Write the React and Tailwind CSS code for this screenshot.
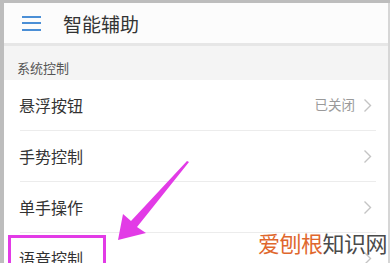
const FONT = { fontFamily: '"Noto Sans CJK SC", "Noto Sans", sans-serif' };

function Chevron() {
  return (
    <svg width="9" height="15" viewBox="0 0 9 15" className="shrink-0">
      <path d="M1.5 1.5 L7.5 7.5 L1.5 13.5" fill="none" stroke="#c4c4c4" strokeWidth="1.4" />
    </svg>
  );
}

function Row({ label, value, last }) {
  return (
    <div className="flex flex-col">
      <div className="h-[50px] flex items-center pl-[15px] pr-[16px]">
        <span className="text-[16px] leading-none text-[#333]">{label}</span>
        <div className="ml-auto flex items-center gap-[8px]">
          {value && <span className="text-[13.5px] leading-none text-[#9a9a9a]">{value}</span>}
          <Chevron />
        </div>
      </div>
      {!last && <div className="h-px bg-[#ececec] ml-[16px] mr-[12px]" />}
    </div>
  );
}

export default function App() {
  const rows = [
    { label: '悬浮按钮', value: '已关闭' },
    { label: '手势控制' },
    { label: '单手操作' },
    { label: '语音控制', last: true },
  ];

  return (
    <div className="relative w-[392px] h-[263px] overflow-hidden bg-white" style={FONT}>
      <div className="border-t-[3px] border-l-[4px] border-[#bdbdbd] w-[390px] h-full">
        <div className="w-[386px] h-full border-r-2 border-[#d6d6d6] bg-white">
          <header className="h-[40px] bg-[#fcfcfc] flex items-center pl-[18px]">
            <div className="flex flex-col gap-[4.5px] w-[19px]">
              <span className="h-[2px] bg-[#4b8fd6]" />
              <span className="h-[2px] bg-[#4b8fd6]" />
              <span className="h-[2px] bg-[#4b8fd6]" />
            </div>
            <h1 className="ml-[22px] text-[19px] leading-none text-[#333]">智能辅助</h1>
          </header>
          <div className="h-[3px] bg-[#e6e6e6]" />
          <div className="h-[34px] bg-[#f4f4f4] flex items-end pl-[13px] pb-[6px]">
            <span className="text-[13px] leading-[13px] text-[#555]">系统控制</span>
          </div>
          {rows.map((r) => (
            <Row key={r.label} {...r} />
          ))}
        </div>
      </div>

      <div className="absolute left-[8px] top-[235px] w-[98px] h-[40px] border-[3px] border-[#e23be6]" />

      <svg className="absolute left-0 top-0" width="392" height="263" viewBox="0 0 392 263">
        <path d="M189 162 L137 227 L146 233 L118 240 L123 214 L131 221 L187 161 Z" fill="#e23be6" />
      </svg>

      <div className="absolute left-[258px] top-[229px] text-[22px] leading-[26px] tracking-[-0.5px]">
        <span className="text-[#e0672d]">爱刨根</span>
        <span className="text-[#4a4a4a]">知识网</span>
      </div>
    </div>
  );
}
